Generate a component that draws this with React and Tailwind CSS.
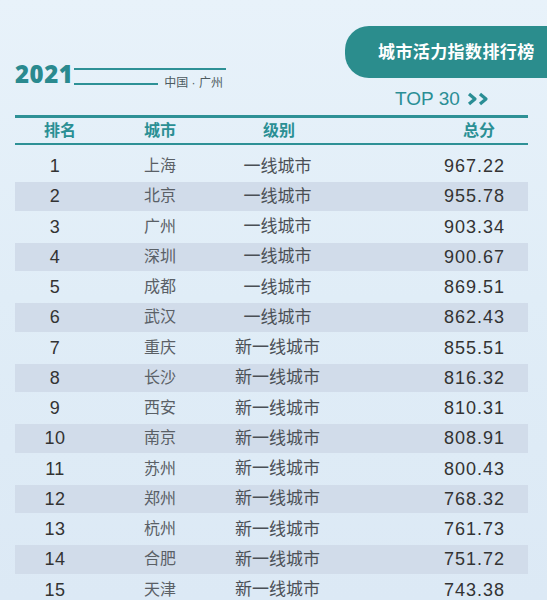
const rows = [
  [1, "上海", "一线城市", "967.22"],
  [2, "北京", "一线城市", "955.78"],
  [3, "广州", "一线城市", "903.34"],
  [4, "深圳", "一线城市", "900.67"],
  [5, "成都", "一线城市", "869.51"],
  [6, "武汉", "一线城市", "862.43"],
  [7, "重庆", "新一线城市", "855.51"],
  [8, "长沙", "新一线城市", "816.32"],
  [9, "西安", "新一线城市", "810.31"],
  [10, "南京", "新一线城市", "808.91"],
  [11, "苏州", "新一线城市", "800.43"],
  [12, "郑州", "新一线城市", "768.32"],
  [13, "杭州", "新一线城市", "761.73"],
  [14, "合肥", "新一线城市", "751.72"],
  [15, "天津", "新一线城市", "743.38"],
];

const cjk = { fontFamily: '"Liberation Sans", "Noto Sans CJK SC", sans-serif' };

function Chevrons() {
  return (
    <svg width="24" height="14" viewBox="0 0 24 14" className="ml-[7px]">
      <path d="M2 2 L8 7 L2 12" fill="none" stroke="#2a8e95" strokeWidth="3.2" strokeLinejoin="round" />
      <path d="M13 2 L19 7 L13 12" fill="none" stroke="#2a8e95" strokeWidth="3.2" strokeLinejoin="round" />
    </svg>
  );
}

export default function App() {
  return (
    <div
      className="w-[547px] h-[600px] overflow-hidden bg-gradient-to-b from-[#e8f2fa] via-[#e0edf7] to-[#dce9f5]"
      style={cjk}
    >
      {/* top area */}
      <div className="h-[115px] flex justify-between">
        <div className="pl-[15px] pt-[62px] flex items-start">
          <span
            className="text-[24px] leading-none font-extrabold text-[#2a8a8f] tracking-[0.5px]"
            style={{ fontFamily: '"Open Sans", sans-serif' }}
          >
            2021
          </span>
          <div className="ml-[1px] mt-[6px] w-[152px] flex flex-col">
            <div className="h-[2px] bg-[#2e9196]" />
            <div className="mt-[6px] h-[13px] flex items-center">
              <div className="w-[84px] h-[2px] bg-[#2e9196] mt-[3px]" />
              <span className="ml-[6px] text-[12px] leading-none text-[#4d5a60] whitespace-nowrap">中国 · 广州</span>
            </div>
          </div>
        </div>
        <div className="w-[202px] pt-[26px] flex flex-col">
          <div className="h-[52px] rounded-l-[24px] bg-[#2b8d8d] flex items-center pl-[33px]">
            <span className="text-white text-[17px] font-bold tracking-[0.4px] leading-none">城市活力指数排行榜</span>
          </div>
          <div className="mt-[11px] pl-[50px] flex items-center">
            <span className="text-[19px] leading-none text-[#2a8e95]">TOP 30</span>
            <Chevrons />
          </div>
        </div>
      </div>

      {/* table */}
      <div className="ml-[15px] w-[513px]">
        <div className="h-[3px] bg-[#2e9196]" />
        <div className="h-[25px] grid grid-cols-[80px_130px_105px_198px] items-center text-[16px] font-bold text-[#2a8f94] leading-none">
          <div className="text-center pl-[10px]">排名</div>
          <div className="text-center">城市</div>
          <div className="text-center pl-[3px]">级别</div>
          <div className="text-right pr-[33px]">总分</div>
        </div>
        <div className="h-[2px] bg-[#2e9196]" />
        <div className="pt-[6px]">
          {rows.map(([rank, city, level, score]) => (
            <div key={rank} className="h-[30.25px] py-[1px]">
              <div
                className={`h-full grid grid-cols-[80px_130px_105px_198px] items-center leading-none ${
                  rank % 2 === 0 ? "bg-[#d1dcea]" : ""
                }`}
              >
                <div className="text-center text-[18px] text-[#333] tracking-[0.5px]">{rank}</div>
                <div className="text-center text-[16px] text-[#5a6066]">{city}</div>
                <div className="text-center text-[17px] text-[#4a4f55]">{level}</div>
                <div className="text-right pr-[23px] text-[18px] text-[#333] tracking-[1px]">{score}</div>
              </div>
            </div>
          ))}
        </div>
      </div>
    </div>
  );
}
